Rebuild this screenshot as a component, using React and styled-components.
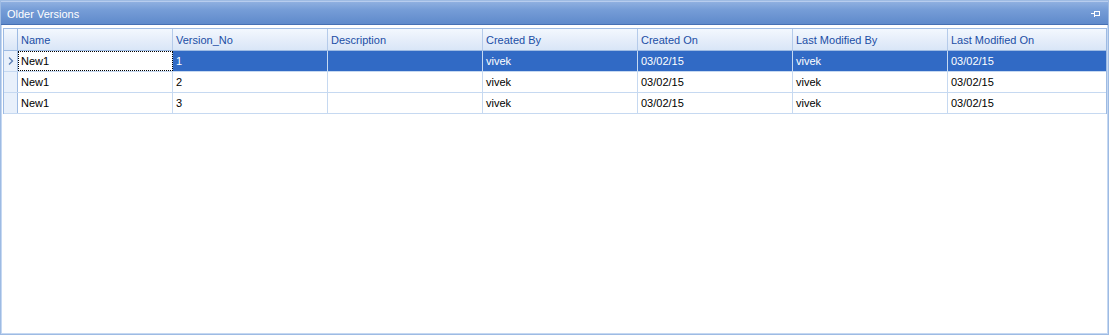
import styled, { createGlobalStyle } from 'styled-components';

const GlobalStyle = createGlobalStyle`
    html, body {
        margin: 0;
        padding: 0;
        background: #ffffff;
    }
    body {
        font-family: "Liberation Sans", "DejaVu Sans", sans-serif;
        font-size: 11px;
    }
`;

const columns = ['Name', 'Version_No', 'Description', 'Created By', 'Created On', 'Last Modified By', 'Last Modified On'];

const rows = [
    ['New1', '1', '', 'vivek', '03/02/15', 'vivek', '03/02/15'],
    ['New1', '2', '', 'vivek', '03/02/15', 'vivek', '03/02/15'],
    ['New1', '3', '', 'vivek', '03/02/15', 'vivek', '03/02/15'],
];

const GRID = '14px repeat(6, 155px) 158px';

const Panel = styled.div`
    width: 1109px;
    height: 335px;
    box-sizing: border-box;
    border: 1px solid #9ebbe3;
    display: flex;
    flex-direction: column;
    background: #ffffff;
`;

const TitleBar = styled.div`
    height: 22px;
    display: flex;
    align-items: center;
    justify-content: space-between;
    padding: 0 7px 0 6px;
    color: #ffffff;
    background: linear-gradient(to bottom, #8fb0e0 0%, #769dd7 35%, #5f8acb 100%);
    border-top: 1px solid #b8cdee;
    border-bottom: 1px solid #4670b3;
`;

const Title = styled.span`
    font-size: 11px;
    padding-top: 2px;
`;

const Body = styled.div`
    flex: 1;
    padding: 3px 1px 0 1px;
    border-left: 1px solid #c5d8f2;
    border-right: 1px solid #c5d8f2;
    border-bottom: 1px solid #c5d8f2;
`;

const Grid = styled.div`
    border-top: 1px solid #9ebbe3;
    border-left: 1px solid #9ebbe3;
    border-right: 1px solid #9ebbe3;
    width: 1102px;
`;

const Row = styled.div`
    display: grid;
    grid-template-columns: ${GRID};
    height: ${(p) => (p.header ? '21px' : '20px')};
    background: ${(p) => (p.header ? 'linear-gradient(to bottom, #f3f8fe 0%, #e6eefa 50%, #d9e6f7 100%)' : p.selected ? '#316ac5' : '#ffffff')};
    border-bottom: 1px solid ${(p) => (p.header ? '#9ebbe3' : '#c6d9f1')};
`;

const Cell = styled.div`
    display: flex;
    align-items: center;
    padding-left: 3px;
    border-right: 1px solid ${(p) => (p.header ? '#b5cbea' : '#c6d9f1')};
    color: ${(p) => (p.header ? '#1c4ea5' : p.selected ? '#ffffff' : '#000000')};
    font-size: 11px;
    white-space: nowrap;
    overflow: hidden;
    box-sizing: border-box;
    &:last-child {
        border-right: none;
    }
`;

const FocusCell = styled(Cell)`
    background: #ffffff;
    color: #000000;
    outline: 1px dotted #000000;
    outline-offset: -1px;
`;

const Indicator = styled.div`
    display: flex;
    align-items: center;
    justify-content: center;
    border-right: 1px solid #9ebbe3;
    background: ${(p) => (p.header ? 'transparent' : '#e8f0fb')};
`;

const PinIcon = () => (
    <svg width="11" height="9" viewBox="0 0 11 9">
        <path d="M0.5 4.5H4.5M4.5 1.5V7.5M4.5 2.5H9.5V6.5H4.5" stroke="#ffffff" strokeWidth="1" fill="none" shapeRendering="crispEdges" />
    </svg>
);

const Chevron = () => (
    <svg width="6" height="8" viewBox="0 0 6 8">
        <path d="M1 0.5L4.5 4L1 7.5" stroke="#5b7eb4" strokeWidth="1.3" fill="none" />
    </svg>
);

const App = () => (
    <>
        <GlobalStyle />
        <Panel>
            <TitleBar>
                <Title>Older Versions</Title>
                <PinIcon />
            </TitleBar>
            <Body>
                <Grid>
                    <Row header>
                        <Indicator header />
                        {columns.map((c) => (
                            <Cell header key={c}>{c}</Cell>
                        ))}
                    </Row>
                    {rows.map((r, i) => (
                        <Row key={i} selected={i === 0}>
                            <Indicator>{i === 0 && <Chevron />}</Indicator>
                            {r.map((v, j) =>
                                i === 0 && j === 0 ? (
                                    <FocusCell key={j}>{v}</FocusCell>
                                ) : (
                                    <Cell key={j} selected={i === 0}>{v}</Cell>
                                )
                            )}
                        </Row>
                    ))}
                </Grid>
            </Body>
        </Panel>
    </>
);

export default App;
